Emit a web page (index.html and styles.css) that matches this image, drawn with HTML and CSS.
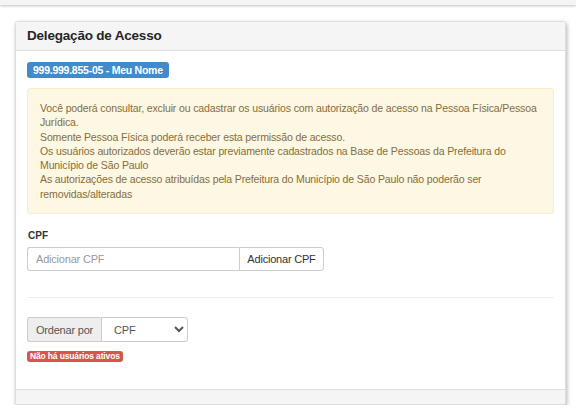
FILE: index.html
```html
<!DOCTYPE html>
<html>

<head>
  <title>Delegação de Acesso</title>
  <link rel="stylesheet" href="styles.css">
</head>

<body>
  <div class="topbar"></div>

  <div class="page">
    <div class="panel">
      <div class="panel-heading">
        <h3 class="panel-title">Delegação de Acesso</h3>
      </div>

      <div class="panel-body">
        <span class="badge badge-primary">999.999.855-05 - Meu Nome</span>

        <div class="alert">
          Você poderá consultar, excluir ou cadastrar os usuários com autorização de acesso na Pessoa Física/Pessoa Jurídica.<br>
          Somente Pessoa Física poderá receber esta permissão de acesso.<br>
          Os usuários autorizados deverão estar previamente cadastrados na Base de Pessoas da Prefeitura do Município de São Paulo<br>
          As autorizações de acesso atribuídas pela Prefeitura do Município de São Paulo não poderão ser removidas/alteradas
        </div>

        <label for="cpf" class="field-label">CPF</label>
        <div class="input-group">
          <input type="text" id="cpf" class="input-cpf" placeholder="Adicionar CPF">
          <button type="button" class="btn-add">Adicionar CPF</button>
        </div>

        <hr class="divider">

        <div class="input-group">
          <span class="addon">Ordenar por</span>
          <select class="select-order">
            <option value="cpf">CPF</option>
            <option value="nome">Nome</option>
          </select>
        </div>

        <div class="status">
          <span class="badge badge-danger">Não há usuários ativos</span>
        </div>
      </div>

      <div class="panel-footer"></div>
    </div>
  </div>
</body>

</html>
```

FILE: styles.css
```css
body {
  font-family: "Liberation Sans", Arial, sans-serif;
  background-color: #fff;
  color: #333;
  margin: 0;
  padding: 0;
}

.topbar {
  height: 5px;
  background: #f5f5f5;
  box-shadow: 0 1px 3px rgba(0, 0, 0, 0.25);
}

.page {
  padding: 16px 0 0 15px;
  width: 551px;
}

.panel {
  background: #fff;
  border: 1px solid #ddd;
  border-radius: 3px;
  box-shadow: 1px 2px 4px rgba(0, 0, 0, 0.3);
}

.panel-heading {
  background: #f5f5f5;
  border-bottom: 1px solid #ddd;
  height: 28px;
  padding: 0 11px;
}

.panel-title {
  margin: 0;
  font-size: 13.5px;
  letter-spacing: -0.2px;
  font-weight: bold;
  line-height: 28px;
  color: #262626;
}

.panel-body {
  padding: 11px 11px 27px;
  font-size: 10px;
  line-height: 16px;
}

.badge {
  display: inline-block;
  vertical-align: top;
  color: #fff;
  font-weight: bold;
  border-radius: 3px;
}

.badge-primary {
  background: #428bca;
  font-size: 10.5px;
  letter-spacing: -0.25px;
  line-height: 12px;
  padding: 2px 6px;
}

.status {
  margin-top: 9px;
  line-height: 11px;
}

.badge-danger {
  background: #d9534f;
  font-size: 8.5px;
  letter-spacing: -0.15px;
  line-height: 10px;
  padding: 0 3px 1px;
}

.alert {
  margin-top: 10px;
  background: #fcf8e3;
  border: 1px solid #faebcc;
  border-radius: 3px;
  color: #8a6d3b;
  padding: 12px 12px;
  font-size: 10.55px;
  letter-spacing: -0.15px;
  line-height: 14.3px;
}

.field-label {
  display: block;
  margin: 16px 0 5px 1px;
  font-size: 10px;
  line-height: 12px;
  font-weight: bold;
  color: #333;
}

.input-group {
  display: flex;
}

.input-cpf {
  width: 212px;
  height: 24px;
  box-sizing: border-box;
  border: 1px solid #ccc;
  border-right: 0;
  border-radius: 3px 0 0 3px;
  padding: 0 8px;
  font-family: inherit;
  font-size: 11px;
  letter-spacing: -0.2px;
  color: #555;
}

.input-cpf::placeholder {
  color: #999;
}

.btn-add {
  width: 85px;
  height: 24px;
  box-sizing: border-box;
  background: #fff;
  border: 1px solid #ccc;
  border-radius: 0 3px 3px 0;
  font-family: inherit;
  font-size: 11px;
  letter-spacing: -0.2px;
  color: #333;
  padding: 0;
}

.divider {
  border: 0;
  border-top: 1px solid #eee;
  margin: 26px 0 19px;
}

.addon {
  width: 74px;
  height: 25px;
  box-sizing: border-box;
  background: #eee;
  border: 1px solid #ccc;
  border-right: 0;
  border-radius: 3px 0 0 3px;
  font-size: 11px;
  letter-spacing: -0.2px;
  color: #555;
  display: flex;
  align-items: center;
  justify-content: center;
}

.select-order {
  width: 87px;
  height: 25px;
  box-sizing: border-box;
  background: #fff;
  border: 1px solid #ccc;
  border-radius: 0 3px 3px 0;
  font-family: inherit;
  font-size: 11px;
  letter-spacing: -0.2px;
  color: #555;
  padding: 0 8px;
}

.panel-footer {
  background: #f5f5f5;
  border-top: 1px solid #ddd;
  height: 14px;
}
```
